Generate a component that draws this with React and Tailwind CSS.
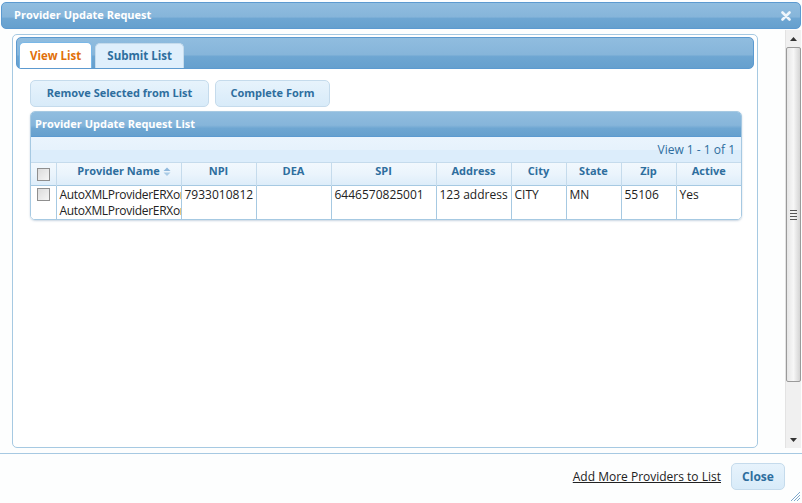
import { useState } from 'react';

const columns = [
  { key: 'name', label: 'Provider Name', w: 'w-[125px]', sort: true },
  { key: 'npi', label: 'NPI', w: 'w-[75px]' },
  { key: 'dea', label: 'DEA', w: 'w-[75px]' },
  { key: 'spi', label: 'SPI', w: 'w-[105px]' },
  { key: 'address', label: 'Address', w: 'w-[75px]' },
  { key: 'city', label: 'City', w: 'w-[55px]' },
  { key: 'state', label: 'State', w: 'w-[55px]' },
  { key: 'zip', label: 'Zip', w: 'w-[55px]' },
  { key: 'active', label: 'Active', w: 'w-[65px]' },
];

const rows = [
  {
    name: ['AutoXMLProviderERXonly', 'AutoXMLProviderERXonly'],
    npi: '7933010812',
    dea: '',
    spi: '6446570825001',
    address: '123 address',
    city: 'CITY',
    state: 'MN',
    zip: '55106',
    active: 'Yes',
  },
];

function Checkbox({ checked, onChange }) {
  return (
    <button
      onClick={onChange}
      className="w-[13px] h-[13px] border border-[#8f8f8f] bg-gradient-to-br from-[#dcdcdc] to-[#f6f6f6] flex items-center justify-center"
    >
      {checked && <span className="block w-[7px] h-[7px] bg-[#2e6e9e]" />}
    </button>
  );
}

function SortIcon() {
  return (
    <svg width="8" height="10" viewBox="0 0 8 10" className="absolute right-[10px] top-[4px]">
      <path d="M0.5 4 L4 0.5 L7.5 4 Z" fill="#8fb8dc" />
      <path d="M0.5 5.5 L4 9 L7.5 5.5 Z" fill="#a9cbe6" />
    </svg>
  );
}

function Scrollbar() {
  return (
    <div className="w-[16px] h-[418px] bg-[#f0f0f0] border-l border-[#e3e3e3] flex flex-col items-center">
      <div className="h-[17px] w-full flex items-center justify-center">
        <svg width="7" height="4" viewBox="0 0 7 4"><path d="M0 4 L3.5 0 L7 4 Z" fill="#333" /></svg>
      </div>
      <div className="w-[15px] h-[335px] rounded-[2px] border border-[#9a9a9a] bg-gradient-to-r from-[#e6e6e6] via-[#f7f7f7] to-[#d4d4d4] flex items-center justify-center">
        <div className="flex flex-col gap-[2px]">
          <div className="w-[7px] h-[1px] bg-[#555]" />
          <div className="w-[7px] h-[1px] bg-[#555]" />
          <div className="w-[7px] h-[1px] bg-[#555]" />
          <div className="w-[7px] h-[1px] bg-[#555]" />
        </div>
      </div>
      <div className="flex-1" />
      <div className="h-[17px] w-full flex items-center justify-center">
        <svg width="7" height="4" viewBox="0 0 7 4"><path d="M0 0 L3.5 4 L7 0 Z" fill="#333" /></svg>
      </div>
    </div>
  );
}

export default function App() {
  const [tab, setTab] = useState('view');
  const [selected, setSelected] = useState({});
  const allChecked = rows.length > 0 && rows.every((_, i) => selected[i]);

  const toggleAll = () => {
    const next = {};
    rows.forEach((_, i) => { next[i] = !allChecked; });
    setSelected(next);
  };

  return (
    <div className="w-[802px] h-[503px] bg-[#fdfefe] relative overflow-hidden font-['Open_Sans',sans-serif] text-[12px] text-[#222]">
      {/* Title bar */}
      <div className="mx-[1px] mt-[2px] h-[27px] rounded-[5px] border border-[#5c9ad0] bg-[linear-gradient(to_bottom,#90bddf_0%,#86b5da_55%,#6ea6d2_62%,#66a0ce_100%)] flex items-center justify-between pl-[12px] pr-[9px]">
        <span className="text-white font-bold text-[11px]">Provider Update Request</span>
        <svg width="10" height="10" viewBox="0 0 10 10">
          <path d="M1.5 1.5 L8.5 8.5 M8.5 1.5 L1.5 8.5" stroke="#eef5fb" strokeWidth="2.6" strokeLinecap="round" />
        </svg>
      </div>

      {/* Body */}
      <div className="flex mt-[1px] h-[423px]">
        <div className="flex-1 pl-[12px] pt-[4px]">
          <div className="w-[746px] h-[414px] rounded-[5px] border border-[#a6c9e2] bg-white px-[3px] pt-[2px]">
            {/* Tabs */}
            <div className="h-[32px] rounded-[5px] border border-[#5c9ad0] bg-[linear-gradient(to_bottom,#90bddf_0%,#86b5da_55%,#6ea6d2_62%,#66a0ce_100%)] flex items-end pl-[2px] gap-[3px]">
              <button
                onClick={() => setTab('view')}
                className={`h-[26px] px-[10px] rounded-t-[5px] border border-b-0 font-bold text-[11.5px] ${tab === 'view' ? 'bg-white border-[#79b7e7] text-[#e17009]' : 'bg-[#dfeffc] border-[#c5dbec] text-[#2e6e9e]'}`}
              >
                View List
              </button>
              <button
                onClick={() => setTab('submit')}
                className={`h-[25px] px-[11px] rounded-t-[5px] border border-b-0 font-bold text-[11.5px] ${tab === 'submit' ? 'bg-white border-[#79b7e7] text-[#e17009]' : 'bg-[#dfeffc] border-[#c5dbec] text-[#2e6e9e]'}`}
              >
                Submit List
              </button>
            </div>

            <div className="pl-[14px] pt-[11px]">
              {/* Buttons */}
              <div className="flex gap-[6px]">
                <button className="h-[27px] w-[179px] rounded-[5px] border border-[#c5dbec] bg-gradient-to-b from-[#e7f3fc] to-[#d8ebf9] text-[#2e6e9e] font-bold text-[11px]">
                  Remove Selected from List
                </button>
                <button className="h-[27px] w-[115px] rounded-[5px] border border-[#c5dbec] bg-gradient-to-b from-[#e7f3fc] to-[#d8ebf9] text-[#2e6e9e] font-bold text-[11px]">
                  Complete Form
                </button>
              </div>

              {/* Grid */}
              <div className="mt-[4px] w-[712px] rounded-[5px] border border-[#a6c9e2] shadow-[0_1px_2px_rgba(120,150,180,0.4)] overflow-hidden">
                <div className="h-[25px] bg-[linear-gradient(to_bottom,#90bddf_0%,#86b5da_55%,#6ea6d2_68%,#66a0ce_100%)] border-b border-[#5c9ad0] flex items-center pl-[4px]">
                  <span className="text-white font-bold text-[11px]">Provider Update Request List</span>
                </div>
                <div className="h-[25px] bg-[linear-gradient(to_bottom,#eaf4fd_0%,#e6f2fc_50%,#dcedfb_52%,#dcedfb_100%)] flex items-center justify-end pr-[6px] text-[#2e6e9e] text-[12px]">
                  View 1 - 1 of 1
                </div>
                <table className="table-fixed border-collapse w-[710px]">
                  <thead>
                    <tr className="h-[23px] bg-[linear-gradient(to_bottom,#f2f8fd_0%,#eaf4fc_50%,#dcecf9_100%)]">
                      <th className="w-[25px] border-r border-t border-[#c5dbec] align-middle">
                        <div className="flex justify-center pt-[1px]">
                          <Checkbox checked={allChecked} onChange={toggleAll} />
                        </div>
                      </th>
                      {columns.map((c, i) => (
                        <th
                          key={c.key}
                          className={`${c.w} relative border-t border-[#c5dbec] ${i < columns.length - 1 ? 'border-r' : ''} text-[#2e6e9e] font-bold text-[11px] text-center align-middle pb-[5px]`}
                        >
                          {c.label}
                          {c.sort && <SortIcon />}
                        </th>
                      ))}
                    </tr>
                  </thead>
                  <tbody>
                    {rows.map((r, ri) => (
                      <tr key={ri} className="h-[32px] bg-white">
                        <td className="border-r border-t border-[#a6c9e2] align-top pt-[2px]">
                          <div className="flex justify-center">
                            <Checkbox
                              checked={!!selected[ri]}
                              onChange={() => setSelected({ ...selected, [ri]: !selected[ri] })}
                            />
                          </div>
                        </td>
                        {columns.map((c, i) => (
                          <td
                            key={c.key}
                            className={`border-t border-[#a6c9e2] ${i < columns.length - 1 ? 'border-r' : ''} align-top pl-[3px] pt-[1px] leading-[16px] overflow-hidden`}
                          >
                            {c.key === 'name' ? (
                              <div className="whitespace-nowrap tracking-[-0.3px]">
                                {r.name.map((n, ni) => <div key={ni}>{n}</div>)}
                              </div>
                            ) : (
                              r[c.key]
                            )}
                          </td>
                        ))}
                      </tr>
                    ))}
                  </tbody>
                </table>
              </div>
            </div>
          </div>
        </div>
        <div className="pr-[1px]">
          <Scrollbar />
        </div>
      </div>

      {/* Footer */}
      <div className="border-t border-[#a6c9e2] h-[50px] flex items-start justify-end gap-[10px] pr-[17px] pt-[9px]">
        <a href="#" className="underline text-[#222] text-[12px] mt-[5px]">Add More Providers to List</a>
        <button className="h-[27px] w-[54px] rounded-[5px] border border-[#c5dbec] bg-gradient-to-b from-[#e7f3fc] to-[#d8ebf9] text-[#2e6e9e] font-bold text-[12px]">
          Close
        </button>
      </div>

      {/* Resize grip */}
      <svg width="12" height="12" viewBox="0 0 12 12" className="absolute right-[1px] bottom-[1px]">
        <path d="M11 2 L2 11 M11 5 L5 11 M11 8 L8 11" stroke="#7fa9cc" strokeWidth="1" />
      </svg>
    </div>
  );
}
